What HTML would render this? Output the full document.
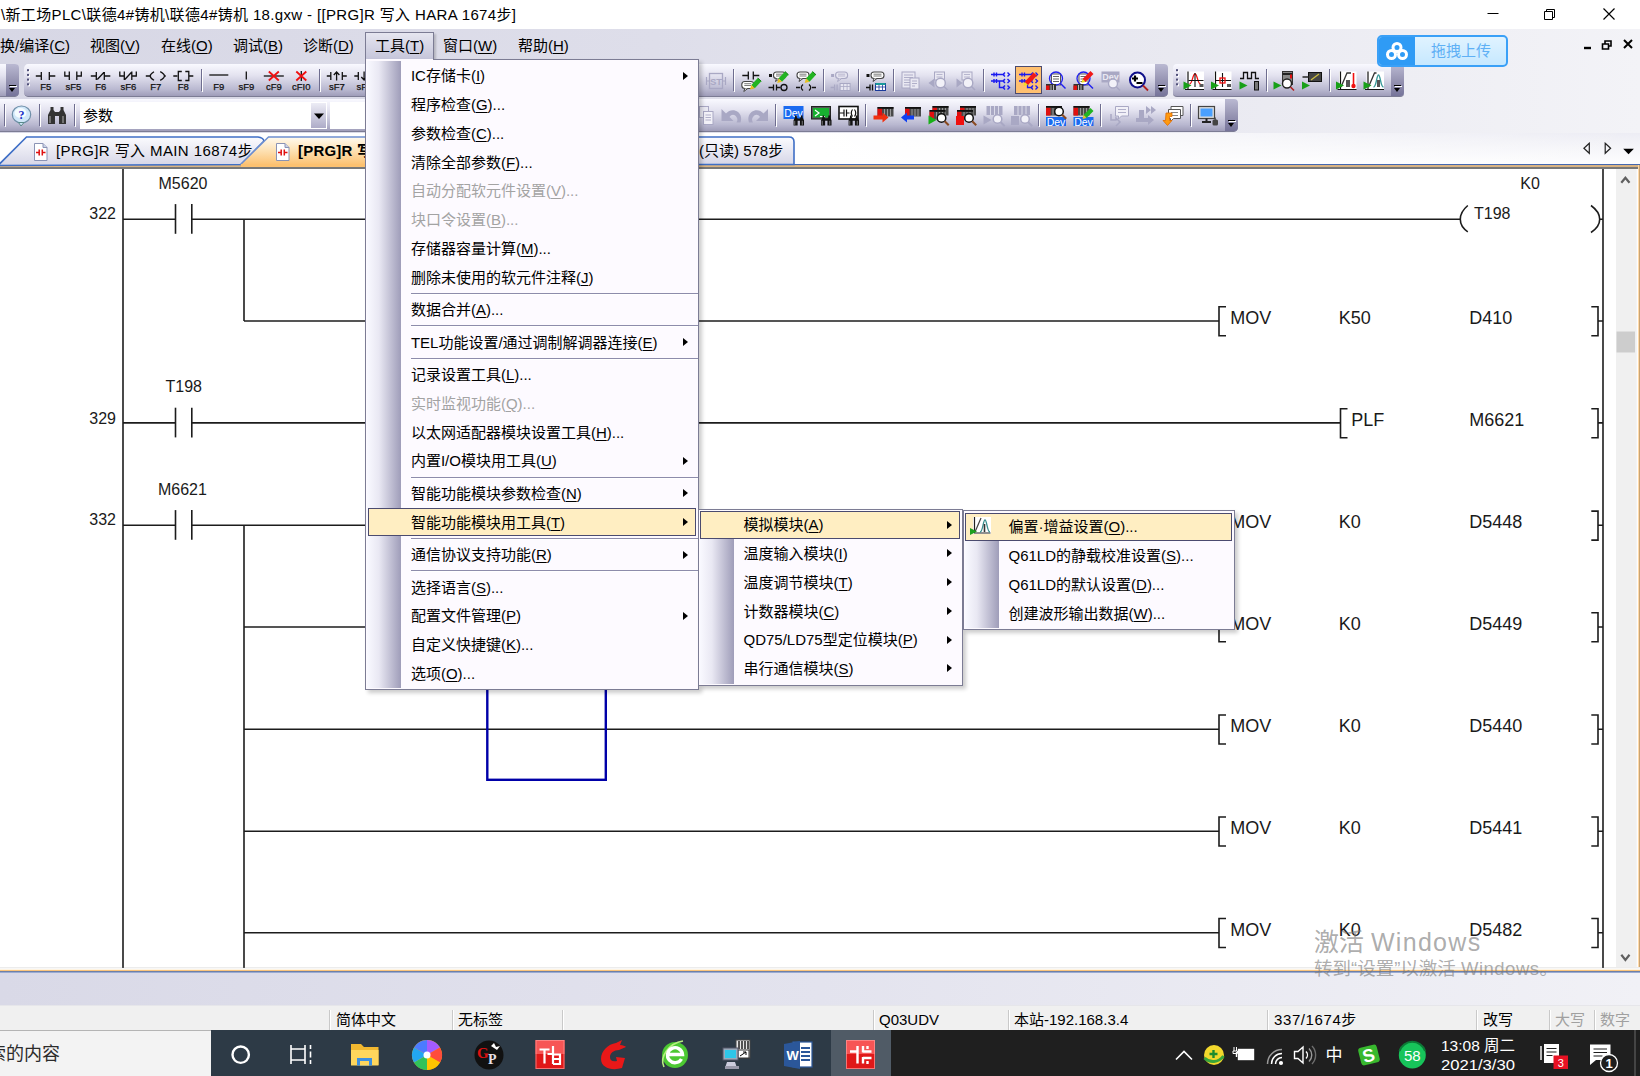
<!DOCTYPE html>
<html lang="zh-CN">
<head>
<meta charset="utf-8">
<title>GX Works2</title>
<style>
html,body{margin:0;padding:0;}
body{width:1640px;height:1076px;position:relative;overflow:hidden;background:#fff;
 font-family:"Liberation Sans","Noto Sans CJK SC",sans-serif;font-size:15px;color:#000;}
.abs{position:absolute;}
.t{position:absolute;white-space:nowrap;line-height:20px;height:20px;}
u{text-decoration:underline;text-underline-offset:2px;}
/* title */
#title{left:0;top:0;width:1640px;height:29px;background:#fff;}
/* dock area */
#dock{left:0;top:29px;width:1640px;height:104px;background:linear-gradient(90deg,#d7d7e5 0,#dedeea 40%,#f3f3f7 100%);}
.mb{position:absolute;top:7px;height:20px;line-height:20px;white-space:nowrap;}
/* toolbars */
.tb{position:absolute;height:32px;background:linear-gradient(180deg,#f9f9ff 0,#e4e3f0 35%,#b9b8d0 80%,#9f9db9 100%);border-bottom:1px solid #7c7c94;border-radius:0 4px 4px 0/0 5px 5px 0;}
.tbopt{position:absolute;top:0;width:13px;height:32px;background:linear-gradient(180deg,#bab9d2 0,#9795b3 50%,#76749a 100%);border-radius:0 4px 4px 0;}
.tbopt:before{content:"";position:absolute;left:3px;top:21px;width:7px;height:1px;background:#000;box-shadow:1px 1px 0 #fff;}
.tbopt:after{content:"";position:absolute;left:3px;top:24px;border:3.5px solid transparent;border-top:4px solid #000;border-bottom:0;}
.grip{position:absolute;top:5px;width:2px;height:20px;background:repeating-linear-gradient(180deg,#54547a 0,#54547a 2px,transparent 2px,transparent 4.4px);}
.grip:after{content:"";position:absolute;left:1px;top:1px;width:2px;height:20px;background:repeating-linear-gradient(180deg,#fff 0,#fff 2px,transparent 2px,transparent 4.4px);z-index:-1;}
.sep{position:absolute;top:5px;width:1px;height:24px;background:#6e6d8f;box-shadow:1px 1px 0 #fff;}
.ic{position:absolute;width:24px;height:24px;}
/* tabs */
#tabs{left:0;top:133px;width:1640px;height:35px;background:linear-gradient(90deg,#fff 0,#fff 50%,rgba(255,255,255,0) 100%),linear-gradient(180deg,#ededf4 0,#fdfdfe 85%);}
/* ladder */
#lad{left:0;top:169px;width:1640px;height:799px;background:#fff;}
.lt{font-family:"Liberation Sans",sans-serif;fill:#1a1a1a;}
/* bottom */
#strip{left:0;top:973px;width:1640px;height:32px;background:linear-gradient(90deg,#d9d9e7 0,#e3e3ee 50%,#f1f1f6 100%);}
#status{left:0;top:1005px;width:1640px;height:25px;background:#f0f0f0;border-top:1px solid #e6e6ea;box-sizing:border-box;}
.ss{position:absolute;top:4px;width:1px;height:21px;background:#c9c9c9;box-shadow:1px 0 0 #fff;}
.st{position:absolute;top:4px;line-height:20px;white-space:nowrap;}
#task{left:0;top:1030px;width:1640px;height:46px;background:#1f1f1f;}
/* menus */
.menu{position:absolute;background:#fdfaff;border:1px solid #7c7c94;box-sizing:border-box;box-shadow:3px 3px 4px rgba(0,0,0,.2);}
.strip{position:absolute;left:1px;top:1px;bottom:1px;background:linear-gradient(90deg,#f9f9ff 0,#e9e8f3 35%,#9f9db9 100%);}
.mi{position:absolute;white-space:nowrap;line-height:20px;height:20px;}
.dis{color:#a3a3a3;}
.msep{position:absolute;height:1px;background:#8d8cab;box-shadow:0 1px 0 #fff;}
.arr{position:absolute;width:0;height:0;border:4.5px solid transparent;border-left:5px solid #000;border-right:0;}
.hl{position:absolute;background:#ffeec2;border:1px solid #4b4b6f;box-sizing:border-box;}
</style>
</head>
<body>
<div id="title" class="abs">
<div class="t" style="left:1px;top:5px;letter-spacing:0.35px">\新工场PLC\联德4#铸机\联德4#铸机 18.gxw - [[PRG]R 写入 HARA 1674步]</div>
<svg class="abs" style="left:1480px;top:0" width="160" height="29" viewBox="0 0 160 29" fill="none" stroke="#000" stroke-width="1">
<path d="M7.5 13.5h11"/>
<path d="M64.5 11.5h8v8h-8z"/><path d="M66.5 11.5v-2h8v8h-2"/>
<path d="M123.5 8.5l11 11M134.5 8.5l-11 11" stroke-width="1.2"/>
</svg>
</div>
<div id="dock" class="abs">
<!-- menubar -->
<div class="mb" style="left:0px">换/编译(<u>C</u>)</div>
<div class="mb" style="left:90px">视图(<u>V</u>)</div>
<div class="mb" style="left:161px">在线(<u>O</u>)</div>
<div class="mb" style="left:233px">调试(<u>B</u>)</div>
<div class="mb" style="left:303px">诊断(<u>D</u>)</div>
<div class="abs" style="left:365px;top:3px;width:68.500px;height:28px;box-sizing:border-box;border:1px solid #7c7c94;border-bottom:0;background:linear-gradient(180deg,#e6e6f0 0,#c4c4d9 100%);box-shadow:2px 2px 2px rgba(0,0,0,.18)"></div>
<div class="mb" style="left:375px">工具(<u>T</u>)</div>
<div class="mb" style="left:443px">窗口(<u>W</u>)</div>
<div class="mb" style="left:518px">帮助(<u>H</u>)</div>
<!-- baidu upload widget -->
<div class="abs" style="left:1377px;top:6px;width:131px;height:32px;box-sizing:border-box;border:2px solid #3aa0f7;border-radius:5px;background:linear-gradient(180deg,#e0f3ff 0,#c6e8ff 100%);overflow:hidden;z-index:5">
<div class="abs" style="left:0;top:0;width:36px;height:28px;background:#2f9bf5"></div>
<svg class="abs" style="left:5px;top:3px" width="26" height="22" viewBox="0 0 26 22" fill="none" stroke="#fff" stroke-width="3"><circle cx="13" cy="7.5" r="4"/><circle cx="7.5" cy="14.5" r="4"/><circle cx="18.5" cy="14.5" r="4"/></svg>
<div class="t" style="left:52px;top:4px;color:#5fb0f5;font-size:15px">拖拽上传</div>
</div>
<!-- mdi child controls -->
<svg class="abs" style="left:1580px;top:8px" width="60" height="16" viewBox="0 0 60 16" fill="none" stroke="#000" stroke-width="2">
<path d="M4 11h7" stroke-width="2.4"/>
<path d="M22.5 7h6v5h-6z" stroke-width="1.6"/><path d="M25 7v-3h6v5h-2.5" stroke-width="1.6"/>
<path d="M44 3l8 8M52 3l-8 8"/>
</svg>
<!-- toolbar row 1 -->
<div class="tb" style="left:0;top:35px;width:19px"><div class="tbopt" style="left:6px"></div></div>
<div class="tb" id="tb1" style="left:24px;top:35px;width:1144px;border-radius:4px 4px 4px 4px/5px 5px 5px 5px"><div class="tbopt" style="left:1131px"></div><!--TB1--></div>
<div class="tb" id="tb2" style="left:1173px;top:35px;width:231px;border-radius:4px"><div class="tbopt" style="left:218px"></div><!--TB2--></div>
<!-- toolbar row 2 -->
<div class="tb" id="tb3" style="left:0;top:70px;width:1238px"><div class="tbopt" style="left:1225px"></div><!--TB3--></div>
<!--ICONS--><svg class="abs" style="left:0;top:0" width="1640" height="104" viewBox="0 29 1640 104"><rect x="28" y="70.2" width="2" height="2" fill="#fff"/><rect x="27" y="69.2" width="2" height="2" fill="#4f4f78"/>
<rect x="28" y="74.9" width="2" height="2" fill="#fff"/><rect x="27" y="73.9" width="2" height="2" fill="#4f4f78"/>
<rect x="28" y="79.6" width="2" height="2" fill="#fff"/><rect x="27" y="78.6" width="2" height="2" fill="#4f4f78"/>
<rect x="28" y="84.3" width="2" height="2" fill="#fff"/><rect x="27" y="83.3" width="2" height="2" fill="#4f4f78"/>
<rect x="1177" y="70.2" width="2" height="2" fill="#fff"/><rect x="1176" y="69.2" width="2" height="2" fill="#4f4f78"/>
<rect x="1177" y="74.9" width="2" height="2" fill="#fff"/><rect x="1176" y="73.9" width="2" height="2" fill="#4f4f78"/>
<rect x="1177" y="79.6" width="2" height="2" fill="#fff"/><rect x="1176" y="78.6" width="2" height="2" fill="#4f4f78"/>
<rect x="1177" y="84.3" width="2" height="2" fill="#fff"/><rect x="1176" y="83.3" width="2" height="2" fill="#4f4f78"/>
<g transform="translate(35.8 70.5)"><path d="M0 5.500H5.500M5.500 1.500V9.500M13.500 1.500V9.500M13.500 5.500H19.500" stroke="#111" stroke-width="1.3" fill="none"/><text x="10" y="19.2" font-size="9.5" text-anchor="middle" font-family="Liberation Sans, sans-serif" fill="#111" stroke="#111" stroke-width="0.25">F5</text></g>
<g transform="translate(63.3 70.5)"><path d="M1.500 1V5.500H6M6 1V9.500M13.500 1V9.500M13.500 5.500H18V1" stroke="#111" stroke-width="1.3" fill="none"/><text x="10" y="19.2" font-size="9.5" text-anchor="middle" font-family="Liberation Sans, sans-serif" fill="#111" stroke="#111" stroke-width="0.25">sF5</text></g>
<g transform="translate(90.8 70.5)"><path d="M0 5.500H5.500M5.500 1.500V9.500M13.500 1.500V9.500M13.500 5.500H19.500M6.500 9L13 2" stroke="#111" stroke-width="1.3" fill="none"/><text x="10" y="19.2" font-size="9.5" text-anchor="middle" font-family="Liberation Sans, sans-serif" fill="#111" stroke="#111" stroke-width="0.25">F6</text></g>
<g transform="translate(118.3 70.5)"><path d="M1.500 1V5.500H6M6 1V9.500M13.500 1V9.500M13.500 5.500H18V1M6.500 9L13 2" stroke="#111" stroke-width="1.3" fill="none"/><text x="10" y="19.2" font-size="9.5" text-anchor="middle" font-family="Liberation Sans, sans-serif" fill="#111" stroke="#111" stroke-width="0.25">sF6</text></g>
<g transform="translate(145.8 70.5)"><path d="M0 5.500H4.400M8.200 1.200Q0.600 5.500 8.200 9.800M14.400 1.200Q22.800 5.500 14.400 9.800M18.600 5.500H20" stroke="#111" stroke-width="1.3" fill="none"/><text x="10" y="19.2" font-size="9.5" text-anchor="middle" font-family="Liberation Sans, sans-serif" fill="#111" stroke="#111" stroke-width="0.25">F7</text></g>
<g transform="translate(173.3 70.5)"><path d="M0 5.500H4M8.500 1H5V10H8.500M12 1H15.500V10H12M15.500 5.500H20" stroke="#111" stroke-width="1.3" fill="none"/><text x="10" y="19.2" font-size="9.5" text-anchor="middle" font-family="Liberation Sans, sans-serif" fill="#111" stroke="#111" stroke-width="0.25">F8</text></g>
<g transform="translate(208.8 70.5)"><path d="M0.500 4.500H19.500" stroke="#111" stroke-width="1.3" fill="none"/><text x="10" y="19.2" font-size="9.5" text-anchor="middle" font-family="Liberation Sans, sans-serif" fill="#111" stroke="#111" stroke-width="0.25">F9</text></g>
<g transform="translate(236.3 70.5)"><path d="M10 1V9" stroke="#111" stroke-width="1.3" fill="none"/><text x="10" y="19.2" font-size="9.5" text-anchor="middle" font-family="Liberation Sans, sans-serif" fill="#111" stroke="#111" stroke-width="0.25">sF9</text></g>
<g transform="translate(263.8 70.5)"><path d="M0 5.500H20" stroke="#111" stroke-width="1.3" fill="none"/><path d="M5 1L15 10M15 1L5 10" stroke="#f01010" stroke-width="1.800" fill="none"/><text x="10" y="19.2" font-size="9.5" text-anchor="middle" font-family="Liberation Sans, sans-serif" fill="#111" stroke="#111" stroke-width="0.25">cF9</text></g>
<g transform="translate(291.3 70.5)"><path d="M10 0.500V10.500" stroke="#111" stroke-width="1.3" fill="none"/><path d="M5 1L15 10M15 1L5 10" stroke="#f01010" stroke-width="1.800" fill="none"/><text x="10" y="19.2" font-size="9.5" text-anchor="middle" font-family="Liberation Sans, sans-serif" fill="#111" stroke="#111" stroke-width="0.25">cFI0</text></g>
<g transform="translate(326.8 70.5)"><path d="M0 5.500H4M4 1.500V9.500M15.500 1.500V9.500M15.500 5.500H20M9.800 10V1.500M7 4.500L9.800 1.500L12.600 4.500" stroke="#111" stroke-width="1.3" fill="none"/><text x="10" y="19.2" font-size="9.5" text-anchor="middle" font-family="Liberation Sans, sans-serif" fill="#111" stroke="#111" stroke-width="0.25">sF7</text></g>
<g transform="translate(354.3 70.5)"><path d="M0 5.500H4M4 1.500V9.500M15.500 1.500V9.500M15.500 5.500H20M9.800 1V9.500M7 6.500L9.800 9.500L12.600 6.500" stroke="#111" stroke-width="1.3" fill="none"/><text x="10" y="19.2" font-size="9.5" text-anchor="middle" font-family="Liberation Sans, sans-serif" fill="#111" stroke="#111" stroke-width="0.25">sF8</text></g>
<rect x="201" y="69" width="1" height="22" fill="#6e6d8f"/><rect x="202" y="70" width="1" height="22" fill="#fff"/>
<rect x="319" y="69" width="1" height="22" fill="#6e6d8f"/><rect x="320" y="70" width="1" height="22" fill="#fff"/>
<g transform="translate(706 71)"><rect x="3.500" y="2.500" width="13" height="15" fill="none" stroke="#a9a8c4" stroke-width="1.300"/><path d="M0.500 6v8M19.500 6v8M0.500 10h3M16.500 10h3" stroke="#a9a8c4" stroke-width="1.200"/><text x="10" y="14" font-size="9.500" font-weight="bold" text-anchor="middle" font-family="Liberation Sans, sans-serif" fill="#a9a8c4">ST</text></g>
<rect x="733" y="69" width="1" height="22" fill="#6e6d8f"/><rect x="734" y="70" width="1" height="22" fill="#fff"/>
<g transform="translate(741.3 71)"><path d="M1 4.500H7M7 0.500V8.500M12 0.500V8.500M12 4.500H18" stroke="#111" stroke-width="1.3" fill="none"/><rect x="0.5" y="10.5" width="12" height="7" rx="3" fill="#fff" stroke="#444" stroke-width="1.100"/><path d="M3.5 17.5l-1 3l4-3" fill="#fff" stroke="#444" stroke-width="1"/><path d="M3.0 12.7h7M3.0 14.5h7" stroke="#444" stroke-width=".7"/><path d="M10 14l6.500-7 3.500 3.300-6.500 7z" fill="#22b422"/><path d="M10 14l3.500 3.300-4.800 1.300z" fill="#e8c020"/><path d="M16.5 7l3.500 3.300" stroke="#157a15" stroke-width="1"/></g>
<g transform="translate(768.5 71)"><rect x="0.500" y="3" width="3" height="3" fill="#111"/><rect x="5" y="1" width="12" height="6.5" rx="3" fill="#fff" stroke="#444" stroke-width="1.100"/><path d="M8 7.5l-1 3l4-3" fill="#fff" stroke="#444" stroke-width="1"/><path d="M7.5 3.2h7M7.5 5h7" stroke="#444" stroke-width=".7"/><path d="M10 7.5l6.500-7 3.500 3.300-6.500 7z" fill="#22b422"/><path d="M10 7.5l3.500 3.300-4.800 1.300z" fill="#e8c020"/><path d="M16.5 0.5l3.500 3.300" stroke="#157a15" stroke-width="1"/><path d="M0 16.500H5M5 13.500V19.500M8 13.500V19.500M8 16.500H12" stroke="#111" stroke-width="1.3" fill="none"/><circle cx="15.500" cy="16.500" r="3" stroke="#111" stroke-width="1.3" fill="none"/></g>
<g transform="translate(796 71)"><rect x="1" y="1" width="12" height="6.5" rx="3" fill="#fff" stroke="#444" stroke-width="1.100"/><path d="M4 7.5l-1 3l4-3" fill="#fff" stroke="#444" stroke-width="1"/><path d="M3.5 3.2h7M3.5 5h7" stroke="#444" stroke-width=".7"/><path d="M10 7.5l6.500-7 3.500 3.300-6.500 7z" fill="#22b422"/><path d="M10 7.5l3.500 3.300-4.800 1.300z" fill="#e8c020"/><path d="M16.5 0.5l3.500 3.300" stroke="#157a15" stroke-width="1"/><path d="M0 16.500H4M7 13.500Q3.500 16.500 7 19.500M13 13.500Q16.500 16.500 13 19.500M16 16.500H20" stroke="#111" stroke-width="1.3" fill="none"/></g>
<rect x="823" y="69" width="1" height="22" fill="#6e6d8f"/><rect x="824" y="70" width="1" height="22" fill="#fff"/>
<g transform="translate(830.6 71)"><rect x="0.500" y="3" width="3" height="3" fill="#a9a8c4"/><rect x="5" y="1" width="12" height="6.5" rx="3" fill="#e6e5f0" stroke="#a9a8c4" stroke-width="1.100"/><path d="M8 7.5l-1 3l4-3" fill="#e6e5f0" stroke="#a9a8c4" stroke-width="1"/><path d="M7.5 3.2h7M7.5 5h7" stroke="#a9a8c4" stroke-width=".7"/><path d="M0 16.500H4M4 13.500V19.500M6.500 13.500V19.500" stroke="#a9a8c4" stroke-width="1.300" fill="none"/><rect x="9.500" y="12.500" width="10" height="7" fill="#e6e5f0" stroke="#a9a8c4"/><path d="M9.500 15.500h10M13 12.500v7M16.500 12.500v7" stroke="#a9a8c4" stroke-width=".8"/></g>
<rect x="858" y="69" width="1" height="22" fill="#6e6d8f"/><rect x="859" y="70" width="1" height="22" fill="#fff"/>
<g transform="translate(866 71)"><rect x="0.500" y="3" width="3" height="3" fill="#111"/><rect x="5" y="1" width="13" height="6.5" rx="3" fill="#fff" stroke="#444" stroke-width="1.100"/><path d="M8 7.5l-1 3l4-3" fill="#fff" stroke="#444" stroke-width="1"/><path d="M7.5 3.2h8M7.5 5h8" stroke="#444" stroke-width=".7"/><path d="M0 16.500H4M4 13.500V19.500M6.500 13.500V19.500" stroke="#111" stroke-width="1.3" fill="none"/><rect x="9.500" y="12.500" width="10" height="7" fill="#fff" stroke="#1a3a9a"/><rect x="9.500" y="12" width="10" height="2" fill="#1a9a9a"/><path d="M9.500 16h10M13 14v5.500M16.500 14v5.500" stroke="#1a3a9a" stroke-width=".8"/></g>
<rect x="893" y="69" width="1" height="22" fill="#6e6d8f"/><rect x="894" y="70" width="1" height="22" fill="#fff"/>
<g transform="translate(901 71)"><rect x="1" y="1" width="13" height="16" fill="#e9e8f2" stroke="#a9a8c4"/><path d="M3 4h9M3 6.500h9M3 9h9M3 11.500h9M3 14h6" stroke="#a9a8c4" stroke-width=".9"/><rect x="9" y="7" width="9" height="11" fill="#e9e8f2" stroke="#a9a8c4"/><path d="M11 10h5M11 12.500h5M11 15h3" stroke="#a9a8c4" stroke-width=".9"/></g>
<g transform="translate(928.5 71)"><rect x="6" y="1" width="10" height="8" fill="#e9e8f2" stroke="#a9a8c4"/><path d="M8 3.500h6M8 6h6" stroke="#a9a8c4" stroke-width=".8"/><circle cx="12" cy="12" r="4.800" fill="#f2f1f8" stroke="#a9a8c4" stroke-width="1.400"/><path d="M15.500 15.500l3.500 3.500" stroke="#a9a8c4" stroke-width="1.600"/><path d="M0 12l6-4.500v9z" fill="#a9a8c4"/></g>
<g transform="translate(956 71)"><rect x="6" y="1" width="10" height="8" fill="#e9e8f2" stroke="#a9a8c4"/><path d="M8 3.500h6M8 6h6" stroke="#a9a8c4" stroke-width=".8"/><circle cx="12" cy="12" r="4.800" fill="#f2f1f8" stroke="#a9a8c4" stroke-width="1.400"/><path d="M15.500 15.500l3.500 3.500" stroke="#a9a8c4" stroke-width="1.600"/><path d="M6.500 12l-6-4.500v9z" fill="#a9a8c4"/></g>
<rect x="983" y="69" width="1" height="22" fill="#6e6d8f"/><rect x="984" y="70" width="1" height="22" fill="#fff"/>
<g transform="translate(990.5 71)"><path d="M0.500 3.500H14M3.500 1.500V5.500M6 1.500V5.500M14.500 1.500l-2 2 2 2M17 1.500l2 2-2 2M0.500 10H14M3.500 8V12M6 8V12M14.500 8l-2 2 2 2M17 8l2 2-2 2M9 10V16.500H14M14.500 14.500l-2 2 2 2M17 14.500l2 2-2 2" stroke="#1a1af0" stroke-width="1.400" fill="none"/></g>
<rect x="1015.500" y="66.500" width="26" height="27" fill="#ffc070" stroke="#4b4b6f" stroke-width="1"/>
<g transform="translate(1018.5 71)"><path d="M0.500 3.500H14M3.500 1.500V5.500M6 1.500V5.500M14.500 1.500l-2 2 2 2M17 1.500l2 2-2 2M0.500 10H14M3.500 8V12M6 8V12M14.500 8l-2 2 2 2M17 8l2 2-2 2M9 10V16.500H14M14.500 14.500l-2 2 2 2M17 14.500l2 2-2 2" stroke="#1a1af0" stroke-width="1.300" fill="none"/><path d="M6 11l9-9.500 3.500 3-9 9.500z" fill="#f01818"/><path d="M6 11l3.500 3-4.500 1z" fill="#f0e020"/></g>
<g transform="translate(1046 71)"><rect x="5.500" y="3" width="9" height="11" fill="#fff" stroke="#555"/><path d="M7 5.500h6M7 8h6M7 10.500h6" stroke="#555" stroke-width=".9"/><circle cx="10" cy="7.500" r="6.500" stroke="#2020f0" stroke-width="1.300" fill="none"/><path d="M14.500 12.500l5 5" stroke="#2020f0" stroke-width="1.400"/><rect x="0" y="13" width="10" height="6" fill="#333"/><rect x="0" y="14.5" width="3.500" height="4.500" fill="#e01010"/><path d="M5 14v5M7.5 14v5" stroke="#bbb" stroke-width="1"/></g>
<g transform="translate(1073.5 71)"><rect x="5.500" y="3" width="9" height="11" fill="#fff" stroke="#555"/><path d="M7 5.500h6M7 8h6M7 10.500h6" stroke="#555" stroke-width=".9"/><circle cx="10" cy="7.500" r="6.500" stroke="#2020f0" stroke-width="1.300" fill="none"/><path d="M14.500 12.500l5 5" stroke="#2020f0" stroke-width="1.400"/><path d="M9 8l8-8 3 3-8 8z" fill="#f01818"/><path d="M9 8l3 3-4 .8z" fill="#f0e020"/><rect x="0" y="13" width="10" height="6" fill="#333"/><rect x="0" y="14.5" width="3.500" height="4.500" fill="#e01010"/><path d="M5 14v5M7.5 14v5" stroke="#bbb" stroke-width="1"/></g>
<g transform="translate(1101 71)"><rect x="0.500" y="0.500" width="18" height="11" fill="#a9a8c4"/><text x="9.500" y="9" font-size="9" font-weight="bold" text-anchor="middle" font-family="Liberation Sans, sans-serif" fill="#e9e8f2">Dev</text><circle cx="12" cy="12.500" r="4.500" fill="#f2f1f8" stroke="#a9a8c4" stroke-width="1.400"/><path d="M15.500 16l3.500 3.500" stroke="#a9a8c4" stroke-width="1.600"/></g>
<g transform="translate(1128.5 71)"><circle cx="9" cy="9" r="7.500" fill="#fff" stroke="#10108a" stroke-width="2"/><path d="M3.500 7.500h6M6.500 4.500v6M8 12h6" stroke="#000" stroke-width="2.200"/><path d="M14.500 14.500l5 5" stroke="#b02020" stroke-width="1.800"/></g>
<g transform="translate(1184.5 71)"><rect x="2" y="0.500" width="17.500" height="17.500" fill="#fff"/><path d="M3.500 0.500V18M0.500 18.500H19.500" stroke="#111" stroke-width="1.200" fill="none"/><path d="M5 13c3 0 3-10 5.500-10s2.500 10 5.500 10" stroke="#f01010" stroke-width="1.300" fill="none"/><path d="M10.500 2v14M4 9.500h15" stroke="#111" stroke-width="1.100"/><rect x="15" y="13" width="4" height="3" fill="#555"/><path d="M-1 10.5l8 4-8 4z" fill="#18a018"/></g>
<g transform="translate(1212 71)"><rect x="2" y="0.500" width="17.500" height="17.500" fill="#fff"/><path d="M3.500 0.500V18M0.500 18.500H19.500" stroke="#111" stroke-width="1.200" fill="none"/><path d="M10.500 2v14M4 9.500h15" stroke="#111" stroke-width="1.100"/><rect x="8" y="7" width="5" height="5" fill="none" stroke="#f01010" stroke-width="1.300"/><rect x="15" y="13" width="4" height="3" fill="#555"/><path d="M-1 10.5l8 4-8 4z" fill="#18a018"/></g>
<g transform="translate(1239.5 71)"><path d="M0.500 7.500H4V1.500H8V7.500H12V1.500H16V7.500H19.500" stroke="#111" stroke-width="1.300" fill="none"/><rect x="15" y="10.500" width="4" height="8.500" fill="#777" stroke="#111"/><path d="M0 10.5l8 4-8 4z" fill="#18a018"/></g>
<rect x="1266" y="69" width="1" height="22" fill="#6e6d8f"/><rect x="1267" y="70" width="1" height="22" fill="#fff"/>
<g transform="translate(1274.5 71)"><rect x="8" y="0.500" width="10" height="13" fill="#888" stroke="#333"/><path d="M8 3h10" stroke="#222" stroke-width="2"/><rect x="15.500" y="3.500" width="2" height="4" fill="#e01010"/><circle cx="12.500" cy="12.500" r="4.500" fill="#fff" stroke="#222" stroke-width="1.400"/><path d="M16 16l3.500 3.500" stroke="#b02020" stroke-width="1.600"/><path d="M-1 10.5l8 4-8 4z" fill="#18a018"/></g>
<g transform="translate(1302 71)"><rect x="6.500" y="1.500" width="13" height="9" fill="#444" stroke="#111"/><path d="M9 9l8-6" stroke="#d0c040" stroke-width="1.200"/><path d="M0.500 6h6" stroke="#333" stroke-width="1.600"/><path d="M0 10.5l8 4-8 4z" fill="#18a018"/></g>
<rect x="1329" y="69" width="1" height="22" fill="#6e6d8f"/><rect x="1330" y="70" width="1" height="22" fill="#fff"/>
<g transform="translate(1337 71)"><rect x="2" y="0.500" width="17.500" height="17.500" fill="#fff"/><path d="M3.500 0.500V18M0.500 18.500H19.500" stroke="#111" stroke-width="1.200" fill="none"/><path d="M4 16l6-14h4" stroke="#333" stroke-width="1.300" fill="none"/><rect x="9" y="9" width="4" height="7" fill="#555"/><path d="M16.500 2v11" stroke="#f01010" stroke-width="1.600"/><circle cx="16.500" cy="15" r="2.200" fill="#f01010"/><path d="M-1 10.5l8 4-8 4z" fill="#18a018"/></g>
<g transform="translate(1364.5 71)"><rect x="2" y="0.500" width="17.500" height="17.500" fill="#fff"/><path d="M3.500 0.500V18M0.500 18.500H19.500" stroke="#111" stroke-width="1.200" fill="none"/><path d="M4 16l6-14h2" stroke="#333" stroke-width="1.300" fill="none"/><path d="M9 16c3 0 3-12 5-12s2 12 5 12" stroke="#3a9a9a" stroke-width="1.400" fill="none"/><rect x="12.500" y="9" width="3" height="7" fill="#555"/><path d="M-1 10.5l8 4-8 4z" fill="#18a018"/></g>
<rect x="4" y="104" width="1" height="22" fill="#6e6d8f"/><rect x="5" y="105" width="1" height="22" fill="#fff"/>
<g transform="translate(11.5 105.5)"><ellipse cx="10" cy="9" rx="9.200" ry="8.500" fill="#cfe6f8" stroke="#6f8fa8" stroke-width="1.200"/><ellipse cx="9" cy="7.500" rx="6" ry="5" fill="#f4fbff"/><path d="M7 17l2.500 3.500 3-3.500z" fill="#cfe6f8" stroke="#5a8a8a" stroke-width="1"/><text x="10" y="13.500" font-size="12" font-weight="bold" text-anchor="middle" font-family="Liberation Serif, serif" fill="#2030c8">?</text></g>
<rect x="39" y="104" width="1" height="22" fill="#6e6d8f"/><rect x="40" y="105" width="1" height="22" fill="#fff"/>
<g transform="translate(47 106)"><g transform="translate(0 0) scale(1)"><path d="M1 18V9l2.500-5V1h3v3l1.500 2h4l1.500-2V1h3v3l2.500 5v9h-7v-8h-4v8z" fill="#333"/><path d="M3 10v7M16 10v7" stroke="#888" stroke-width="1.500"/></g></g>
<rect x="74" y="104" width="1" height="22" fill="#6e6d8f"/><rect x="75" y="105" width="1" height="22" fill="#fff"/>
<rect x="80" y="102" width="247" height="27" fill="#fff"/><defs><linearGradient id="gDD" x1="0" y1="0" x2="0" y2="1"><stop offset="0" stop-color="#ececf5"/><stop offset="1" stop-color="#aeacc8"/></linearGradient></defs><rect x="311" y="103" width="15" height="25" fill="url(#gDD)"/><path d="M314 113.500h10l-5 5.500z" fill="#000"/><rect x="330" y="102" width="360" height="27" fill="#fff"/>
<text x="83" y="120.500" font-size="15" font-family="Liberation Sans, Noto Sans CJK SC, sans-serif" fill="#000">参数</text>
<g transform="translate(696 106)"><rect x="3.500" y="0.500" width="9" height="11" fill="#e9e8f2" stroke="#a9a8c4"/><rect x="7.500" y="5.500" width="9.500" height="13" fill="#f2f1f8" stroke="#a9a8c4"/><path d="M9.500 9h5.500M9.500 11.500h5.500M9.500 14h5.500" stroke="#a9a8c4" stroke-width=".9"/></g>
<g transform="translate(721 106)"><path d="M0.500 3v12h12l-4-4c2-3 5-3 7 0 1.500 2 1 4 0 5.500h4c1.500-4 .5-8-2.500-10.500-4-3-9-2-12 1.500z" fill="#a9a8c4"/></g>
<g transform="translate(748.5 106)"><path d="M19.500 3v12h-12l4-4c-2-3-5-3-7 0-1.500 2-1 4 0 5.500h-4c-1.500-4-.5-8 2.500-10.500 4-3 9-2 12 1.500z" fill="#a9a8c4"/></g>
<rect x="775" y="104" width="1" height="22" fill="#6e6d8f"/><rect x="776" y="105" width="1" height="22" fill="#fff"/>
<g transform="translate(783.5 106)"><rect x="0" y="0" width="20" height="13" fill="#1a6af0"/><text x="10" y="10.500" font-size="10.500" text-anchor="middle" font-family="Liberation Sans, sans-serif" fill="#fff">Dev</text><g transform="translate(9.5 9) scale(0.58)"><path d="M1 18V9l2.500-5V1h3v3l1.500 2h4l1.500-2V1h3v3l2.500 5v9h-7v-8h-4v8z" fill="#111"/><path d="M3 10v7M16 10v7" stroke="#888" stroke-width="1.500"/></g></g>
<g transform="translate(811 106)"><rect x="0.500" y="0.500" width="19" height="12.500" fill="#555" stroke="#222"/><rect x="2" y="2" width="16" height="9.500" fill="#18b030"/><path d="M4 4l4 3-4 3M9 10.500h5" stroke="#fff" stroke-width="1.200" fill="none"/><g transform="translate(9.5 9) scale(0.58)"><path d="M1 18V9l2.500-5V1h3v3l1.500 2h4l1.500-2V1h3v3l2.500 5v9h-7v-8h-4v8z" fill="#111"/><path d="M3 10v7M16 10v7" stroke="#888" stroke-width="1.500"/></g></g>
<g transform="translate(838.5 106)"><rect x="0.500" y="0.500" width="19" height="12.500" fill="#fff" stroke="#111" stroke-width="1.600"/><path d="M1 7h4.500M5.500 3.500v7M8 3.500v7M8 7h3M14 3.500Q11.500 7 14 10.500M16 3.500Q18.500 7 16 10.500" stroke="#111" stroke-width="1.200" fill="none"/><g transform="translate(9.5 9) scale(0.58)"><path d="M1 18V9l2.500-5V1h3v3l1.500 2h4l1.500-2V1h3v3l2.500 5v9h-7v-8h-4v8z" fill="#111"/><path d="M3 10v7M16 10v7" stroke="#888" stroke-width="1.500"/></g></g>
<rect x="865" y="104" width="1" height="22" fill="#6e6d8f"/><rect x="866" y="105" width="1" height="22" fill="#fff"/>
<g transform="translate(873.5 106)"><rect x="4" y="1" width="16" height="9.500" fill="#4a4a4a"/><rect x="4" y="1" width="16" height="1.800" fill="#111"/><rect x="4" y="2.8" width="4.500" height="7.700" fill="#e01010"/><path d="M11 3v7.500M14 3v7.500M17 3v7.500" stroke="#999" stroke-width="1"/><path d="M0 9.500h9v-3l6 5-6 5v-3h-9z" fill="#f03010"/></g>
<g transform="translate(901 106)"><rect x="4" y="1" width="16" height="9.500" fill="#4a4a4a"/><rect x="4" y="1" width="16" height="1.800" fill="#111"/><rect x="4" y="2.8" width="4.500" height="7.700" fill="#e01010"/><path d="M11 3v7.500M14 3v7.500M17 3v7.500" stroke="#999" stroke-width="1"/><path d="M13 9.500h-7v-3l-6 5 6 5v-3h7z" fill="#1040f0"/></g>
<g transform="translate(928.5 106)"><rect x="4" y="0" width="16" height="9.500" fill="#4a4a4a"/><rect x="4" y="0" width="16" height="1.800" fill="#111"/><rect x="4" y="1.8" width="4.500" height="7.700" fill="#e01010"/><path d="M11 2v7.500M14 2v7.500M17 2v7.500" stroke="#999" stroke-width="1"/><rect x="1" y="4" width="16" height="9.500" fill="#4a4a4a"/><rect x="1" y="4" width="16" height="1.800" fill="#111"/><rect x="1" y="5.8" width="4.500" height="7.700" fill="#e01010"/><path d="M8 6v7.500M11 6v7.500M14 6v7.500" stroke="#999" stroke-width="1"/><path d="M0 9.500l8 4.500-8 4.500z" fill="#18b018"/><circle cx="13" cy="12" r="4.300" fill="#fff" stroke="#111" stroke-width="1.500"/><path d="M16.2 15.2l4 4" stroke="#8a4a20" stroke-width="2"/></g>
<g transform="translate(956 106)"><rect x="4" y="0" width="16" height="9.500" fill="#4a4a4a"/><rect x="4" y="0" width="16" height="1.800" fill="#111"/><rect x="4" y="1.8" width="4.500" height="7.700" fill="#e01010"/><path d="M11 2v7.500M14 2v7.500M17 2v7.500" stroke="#999" stroke-width="1"/><rect x="1" y="4" width="16" height="9.500" fill="#4a4a4a"/><rect x="1" y="4" width="16" height="1.800" fill="#111"/><rect x="1" y="5.8" width="4.500" height="7.700" fill="#e01010"/><path d="M8 6v7.500M11 6v7.500M14 6v7.500" stroke="#999" stroke-width="1"/><rect x="0" y="10" width="8" height="9" fill="#f01010"/><circle cx="13" cy="12" r="4.300" fill="#fff" stroke="#111" stroke-width="1.500"/><path d="M16.2 15.2l4 4" stroke="#8a4a20" stroke-width="2"/></g>
<g transform="translate(983.5 106)"><rect x="3" y="0" width="16" height="9" fill="#a9a8c4"/><path d="M7 0v9M11 0v9M15 0v9" stroke="#e9e8f2" stroke-width=".8"/><path d="M0 9.500l8 4.500-8 4.500z" fill="#a9a8c4"/><circle cx="14" cy="13" r="4.300" fill="#f2f1f8" stroke="#a9a8c4" stroke-width="1.500"/><path d="M17.2 16.2l4 4" stroke="#a9a8c4" stroke-width="2"/></g>
<g transform="translate(1011 106)"><rect x="3" y="0" width="16" height="9" fill="#a9a8c4"/><path d="M7 0v9M11 0v9M15 0v9" stroke="#e9e8f2" stroke-width=".8"/><rect x="0" y="10" width="8" height="9" fill="#a9a8c4"/><circle cx="14" cy="13" r="4.300" fill="#f2f1f8" stroke="#a9a8c4" stroke-width="1.500"/><path d="M17.2 16.2l4 4" stroke="#a9a8c4" stroke-width="2"/></g>
<rect x="1038" y="104" width="1" height="22" fill="#6e6d8f"/><rect x="1039" y="105" width="1" height="22" fill="#fff"/>
<g transform="translate(1046 106)"><rect x="0" y="11" width="20" height="9" fill="#1a6af0"/><text x="10" y="19.500" font-size="10.500" text-anchor="middle" font-family="Liberation Sans, sans-serif" fill="#fff">Dev</text><rect x="0" y="0" width="16" height="9.500" fill="#4a4a4a"/><rect x="0" y="0" width="16" height="1.800" fill="#111"/><rect x="0" y="1.8" width="4.500" height="7.700" fill="#e01010"/><path d="M7 2v7.500M10 2v7.500M13 2v7.500" stroke="#999" stroke-width="1"/><circle cx="13" cy="5.5" r="4.300" fill="#fff" stroke="#111" stroke-width="1.500"/><path d="M16.2 8.7l4 4" stroke="#8a4a20" stroke-width="2"/></g>
<g transform="translate(1073.5 106)"><rect x="0" y="11" width="20" height="9" fill="#1a6af0"/><text x="10" y="19.500" font-size="10.500" text-anchor="middle" font-family="Liberation Sans, sans-serif" fill="#fff">Dev</text><rect x="0" y="0" width="16" height="9.500" fill="#4a4a4a"/><rect x="0" y="0" width="16" height="1.800" fill="#111"/><rect x="0" y="1.8" width="4.500" height="7.700" fill="#e01010"/><path d="M7 2v7.500M10 2v7.500M13 2v7.500" stroke="#999" stroke-width="1"/><path d="M10 9l7-7 3 3-7 7z" fill="#22b422"/><path d="M10 9l3 3-4 1z" fill="#e8c020"/></g>
<rect x="1100" y="104" width="1" height="22" fill="#6e6d8f"/><rect x="1101" y="105" width="1" height="22" fill="#fff"/>
<g transform="translate(1110 106)"><path d="M5.500 0.500h13v9.500h-7l-3 3v-3h-3z" fill="#f2f1f8" stroke="#a9a8c4"/><path d="M8 3.500h8M8 6.500h8" stroke="#a9a8c4" stroke-width=".9"/><path d="M1 8v6h5v-2l4 4-4 4" fill="none" stroke="#a9a8c4" stroke-width="1.500"/></g>
<g transform="translate(1136 106)"><rect x="3" y="4" width="5" height="8" fill="#a9a8c4"/><path d="M0 14h12v-3l6 5-6 5v-3h-12z" fill="#a9a8c4" transform="translate(0 -2)"/><path d="M10 0l5 4-5 4zM15 0l5 4-5 4z" fill="#a9a8c4"/></g>
<g transform="translate(1163.5 106)"><path d="M7.500 0.500h12v9h-12z" fill="#fff" stroke="#555"/><path d="M5 3.500h12v9h-7l-3 3v-3h-2z" fill="#fff" stroke="#555"/><path d="M7.500 6.500h7M7.500 9.500h7" stroke="#777" stroke-width=".9"/><path d="M2.500 7h6v3.500h-2.500v4h2.500l-4.500 5-4.500-5h2.500z" fill="#ff9a10" stroke="#e06a00" stroke-width=".8"/></g>
<rect x="1190" y="104" width="1" height="22" fill="#6e6d8f"/><rect x="1191" y="105" width="1" height="22" fill="#fff"/>
<g transform="translate(1198 106)"><rect x="0.500" y="0.500" width="16" height="12" fill="#ddd" stroke="#444" stroke-width="1.200"/><rect x="2.500" y="2.500" width="12" height="8" fill="#4aa0ff"/><path d="M8.500 12.500v3M4 16h9" stroke="#222" stroke-width="2"/><rect x="14.500" y="13.500" width="5.500" height="6" rx="1.500" fill="#444"/><path d="M17.200 11.500v2.500" stroke="#444" stroke-width="1.200"/></g></svg><!--/ICONS-->
</div>
<div id="tabs" class="abs">
<svg class="abs" style="left:0;top:0" width="1640" height="36" viewBox="0 133 1640 36">
<defs>
<linearGradient id="gT1" x1="0" y1="0" x2="0" y2="1"><stop offset="0" stop-color="#fbfbfe"/><stop offset="1" stop-color="#d6d6e7"/></linearGradient>
<linearGradient id="gT2" x1="0" y1="0" x2="0" y2="1"><stop offset="0" stop-color="#fffaf0"/><stop offset="0.45" stop-color="#fde3b8"/><stop offset="1" stop-color="#fcc170"/></linearGradient>
</defs>
<!-- bottom lines -->
<rect x="0" y="164" width="1640" height="1" fill="#4468b0"/>
<rect x="0" y="165" width="1640" height="2" fill="#d9b382"/>
<rect x="0" y="167" width="1638" height="2" fill="#787878"/><rect x="1638" y="165" width="1" height="4" fill="#ffd9a8"/><rect x="1639" y="165" width="1" height="4" fill="#c9a474"/>
<!-- tab 3 (inactive, right) -->
<path d="M600 164.5 L627 137 H789 Q794 137 794 142 V164.5 Z" fill="url(#gT1)" stroke="#3f6fc6" stroke-width="1.6"/>
<!-- tab 1 (inactive) -->
<path d="M-2 165.5 L26.5 137 H258 Q263 137.5 264 141 L241 164.5 Z" fill="url(#gT1)" stroke="#3f6fc6" stroke-width="1.6"/>
<!-- tab 2 (active) -->
<path d="M240.5 165 L268.5 137 H640 Q646 137 646 143 V165 Z" fill="url(#gT2)"/>
<path d="M240.5 164.5 L268.5 137 H640 Q646 137 646 143 V164" fill="none" stroke="#6d8fd0" stroke-width="1.4"/>
<rect x="241" y="164" width="405" height="3" fill="#fcc170"/>
<!-- nav arrows -->
<path d="M1589.300 143.300 L1583.900 148.300 L1589.300 153.300 Z" fill="none" stroke="#222" stroke-width="1.200"/>
<path d="M1605.200 143.300 L1610.600 148.300 L1605.200 153.300 Z" fill="none" stroke="#222" stroke-width="1.200"/>
<path d="M1623.200 148.800 H1633.900 L1628.500 154.200 Z" fill="#000"/>
<!-- file icons -->
<g><path d="M34.500 143.500 h8.500 l4 4 v13 h-12.500 z" fill="#fff" stroke="#8a93b5" stroke-width="1"/><path d="M43 143.500 v4 h4" fill="#c9d0e6" stroke="#8a93b5" stroke-width="1"/><path d="M36 152.500 h3 M42.500 152.500 h3 M39.200 149.500 v6 M42.300 149.500 v6" stroke="#e01010" stroke-width="1.500"/></g>
<g transform="translate(242 0)"><path d="M34.500 143.500 h8.500 l4 4 v13 h-12.500 z" fill="#fff" stroke="#8a93b5" stroke-width="1"/><path d="M43 143.500 v4 h4" fill="#c9d0e6" stroke="#8a93b5" stroke-width="1"/><path d="M36 152.500 h3 M42.500 152.500 h3 M39.200 149.500 v6 M42.300 149.500 v6" stroke="#e01010" stroke-width="1.500"/></g>
</svg>
<div class="t" style="left:56px;top:8px;letter-spacing:0.4px">[PRG]R 写入 MAIN 16874步</div>
<div class="t" style="left:298px;top:8px;font-weight:bold;letter-spacing:0.2px">[PRG]R 写入 HARA 1674步</div>
<div class="t" style="left:699px;top:8px">(只读) 578步</div>
</div>
<!--LADDER--><div id="lad" class="abs">
<svg class="abs" style="left:0;top:0" width="1640" height="799" viewBox="0 169 1640 799">
<g fill="none" stroke="#1c1c1c" stroke-width="1.6">
<path d="M123 169 L123 968"/>
<path d="M1603 169 L1603 968"/>
<path d="M244 219.3 L244 321.0"/>
<path d="M244 525.3 L244 968"/>
<path d="M123 219.3 L175.5 219.3"/>
<path d="M175.5 204.10000000000002 L175.5 233.8"/>
<path d="M191.8 204.10000000000002 L191.8 233.8"/>
<path d="M191.8 219.3 L1460 219.3"/>
<path d="M244 321.0 L1219 321.0"/>
<path d="M123 422.9 L175.5 422.9"/>
<path d="M175.5 407.7 L175.5 437.4"/>
<path d="M191.8 407.7 L191.8 437.4"/>
<path d="M191.8 422.9 L1340.5 422.9"/>
<path d="M123 525.3 L175.5 525.3"/>
<path d="M175.5 510.09999999999997 L175.5 539.8"/>
<path d="M191.8 510.09999999999997 L191.8 539.8"/>
<path d="M191.8 525.3 L1219 525.3"/>
<path d="M244 627.0 L1219 627.0"/>
<path d="M244 729.2 L1219 729.2"/>
<path d="M244 831.2 L1219 831.2"/>
<path d="M244 932.7 L1219 932.7"/>
<path d="M1226 306.8 H1219 V335.8 H1226"/>
<path d="M1591.3 306.8 H1598 V335.8 H1591.3 M1598 321.0 H1603"/>
<path d="M1226 511.1 H1219 V540.1 H1226"/>
<path d="M1591.3 511.1 H1598 V540.1 H1591.3 M1598 525.3 H1603"/>
<path d="M1226 612.8 H1219 V641.8 H1226"/>
<path d="M1591.3 612.8 H1598 V641.8 H1591.3 M1598 627.0 H1603"/>
<path d="M1226 715.0 H1219 V744.0 H1226"/>
<path d="M1591.3 715.0 H1598 V744.0 H1591.3 M1598 729.2 H1603"/>
<path d="M1226 817.0 H1219 V846.0 H1226"/>
<path d="M1591.3 817.0 H1598 V846.0 H1591.3 M1598 831.2 H1603"/>
<path d="M1226 918.5 H1219 V947.5 H1226"/>
<path d="M1591.3 918.5 H1598 V947.5 H1591.3 M1598 932.7 H1603"/>
<path d="M1347.5 408.7 H1340.5 V437.7 H1347.5"/>
<path d="M1591.3 408.7 H1598 V437.7 H1591.3 M1598 422.9 H1603"/>
<path d="M1467.8 205.5 Q1460.3 211.8 1460.3 219.3 Q1460.3 226.8 1467.8 231.8"/>
<path d="M1591 205.5 Q1599.7 211.8 1599.7 219.3 Q1599.7 226.8 1591 232.5 M1599.7 219.3 H1603"/>
</g>
<rect x="487.3" y="680" width="118.500" height="99.800" fill="none" stroke="#0000a8" stroke-width="2.400"/>
<g class="lt" font-family="Liberation Sans, sans-serif" fill="#1a1a1a">
<text x="183" y="188.6" font-size="16" text-anchor="middle">M5620</text>
<text x="183.7" y="392.2" font-size="16" text-anchor="middle">T198</text>
<text x="182.4" y="494.6" font-size="16" text-anchor="middle">M6621</text>
<text x="116" y="218.7" font-size="16" text-anchor="end">322</text>
<text x="116" y="423.5" font-size="16" text-anchor="end">329</text>
<text x="116" y="524.7" font-size="16" text-anchor="end">332</text>
<text x="1520.3" y="188.7" font-size="16" text-anchor="start">K0</text>
<text x="1474" y="218.8" font-size="16" text-anchor="start">T198</text>
<text x="1230.3" y="324.0" font-size="18" text-anchor="start">MOV</text>
<text x="1338.8" y="324.0" font-size="18" text-anchor="start">K50</text>
<text x="1469.2" y="324.0" font-size="18" text-anchor="start">D410</text>
<text x="1351.3" y="425.9" font-size="18" text-anchor="start">PLF</text>
<text x="1469.2" y="425.9" font-size="18" text-anchor="start">M6621</text>
<text x="1230.3" y="528.3" font-size="18" text-anchor="start">MOV</text>
<text x="1338.8" y="528.3" font-size="18" text-anchor="start">K0</text>
<text x="1469.2" y="528.3" font-size="18" text-anchor="start">D5448</text>
<text x="1230.3" y="630.0" font-size="18" text-anchor="start">MOV</text>
<text x="1338.8" y="630.0" font-size="18" text-anchor="start">K0</text>
<text x="1469.2" y="630.0" font-size="18" text-anchor="start">D5449</text>
<text x="1230.3" y="732.2" font-size="18" text-anchor="start">MOV</text>
<text x="1338.8" y="732.2" font-size="18" text-anchor="start">K0</text>
<text x="1469.2" y="732.2" font-size="18" text-anchor="start">D5440</text>
<text x="1230.3" y="834.2" font-size="18" text-anchor="start">MOV</text>
<text x="1338.8" y="834.2" font-size="18" text-anchor="start">K0</text>
<text x="1469.2" y="834.2" font-size="18" text-anchor="start">D5441</text>
<text x="1230.3" y="935.7" font-size="18" text-anchor="start">MOV</text>
<text x="1338.8" y="935.7" font-size="18" text-anchor="start">K0</text>
<text x="1469.2" y="935.7" font-size="18" text-anchor="start">D5482</text>
</g>
<rect x="1616" y="169" width="20" height="799" fill="#f0f0f0"/>
<rect x="1616.500" y="331.500" width="18.500" height="21" fill="#cdcdcd"/>
<path d="M1621.3 182.800 L1625.4 177.700 L1629.500 182.800" fill="none" stroke="#606060" stroke-width="2.200"/>
<path d="M1621.3 954.800 L1625.4 959.900 L1629.500 954.800" fill="none" stroke="#606060" stroke-width="2.200"/>
<rect x="1636" y="169" width="1" height="799" fill="#f4f4f4"/><rect x="1637" y="169" width="1" height="799" fill="#fdfdfd"/><rect x="1638" y="169" width="1" height="799" fill="#ffd9a8"/><rect x="1639" y="169" width="1" height="799" fill="#c9a474"/>
</svg>
</div><!--/LADDER-->
<div class="abs" style="left:0;top:967px;width:1640px;height:6px;background:linear-gradient(180deg,#ececec 0,#ececec 1px,#f7f7f7 1px,#f7f7f7 2px,#fff4e2 2px,#fff4e2 3px,#fbc57c 3px,#fbc57c 4px,#6f80a6 4px,#6f80a6 5px,#9aabd2 5px,#9aabd2 6px)"></div>
<div class="abs" style="left:123px;top:967px;width:1.600px;margin-left:-.8px;height:1px;background:#555"></div><div class="abs" style="left:244px;top:967px;width:1.600px;margin-left:-.8px;height:1px;background:#555"></div><div class="abs" style="left:1603px;top:967px;width:1.600px;margin-left:-.8px;height:1px;background:#555"></div>
<div id="strip" class="abs"></div>
<div id="status" class="abs">
<div class="ss" style="left:329px"></div><div class="st" style="left:336px">简体中文</div>
<div class="ss" style="left:452px"></div><div class="st" style="left:458px">无标签</div>
<div class="ss" style="left:562px"></div>
<div class="ss" style="left:873px"></div><div class="st" style="left:879px">Q03UDV</div>
<div class="ss" style="left:1008px"></div><div class="st" style="left:1014px">本站-192.168.3.4</div>
<div class="ss" style="left:1267px"></div><div class="st" style="left:1274px;letter-spacing:0.6px">337/1674步</div>
<div class="ss" style="left:1476px"></div><div class="st" style="left:1483px">改写</div>
<div class="ss" style="left:1549px"></div><div class="st" style="left:1555px;color:#a0a0a0">大写</div>
<div class="ss" style="left:1594px"></div><div class="st" style="left:1600px;color:#a0a0a0">数字</div>
</div>
<div id="task" class="abs">
<div class="abs" style="left:211px;top:0;width:680px;height:46px;background:#2d3a46"></div>
<div class="abs" style="left:831px;top:0;width:60px;height:46px;background:#505b66"></div>
<div class="abs" style="left:0;top:0;width:211px;height:46px;background:#f3f3f3;border-top:1px solid #b4b4b4;box-sizing:border-box"></div>
<div class="t" style="left:-12px;top:12px;font-size:18px;line-height:24px;height:24px;color:#2b2b2b">索的内容</div>
<svg class="abs" style="left:211px;top:0" width="1429" height="46" viewBox="211 1030 1429 46">
<!-- cortana -->
<circle cx="240.700" cy="1054.700" r="8.200" fill="none" stroke="#fff" stroke-width="2.400"/>
<!-- task view -->
<g fill="none" stroke="#fff" stroke-width="1.600"><path d="M291 1045v4M291 1060v4M291 1049h14v11h-14zM305 1045v4M305 1060v4"/><path d="M310.500 1045v4M310.500 1051.500v6M310.500 1060v4"/></g>
<!-- explorer folder -->
<path d="M351 1044h10l3 3h14.500v18h-27.500z" fill="#f2b830"/><path d="M351 1050h27.500v15.500h-27.500z" fill="#ffd65c"/><path d="M357 1058h15v7.500h-15z" fill="#3d8fe0"/><path d="M360 1061h9v4.500h-9z" fill="#ffd65c"/>
<!-- photos pinwheel -->
<g transform="translate(427 1055)"><circle r="15" fill="#ffb400"/><path d="M0 0L0 -15A15 15 0 0 1 13 -7.500Z" fill="#a45bff"/><path d="M0 0L13 -7.500A15 15 0 0 1 13 7.500Z" fill="#ff4c3b"/><path d="M0 0L13 7.500A15 15 0 0 1 0 15Z" fill="#ffc400"/><path d="M0 0L0 15A15 15 0 0 1 -13 7.500Z" fill="#30c25a"/><path d="M0 0L-13 7.500A15 15 0 0 1 -13 -7.500Z" fill="#22a6f2"/><path d="M0 0L-13 -7.500A15 15 0 0 1 0 -15Z" fill="#4b7bff"/><circle r="3.500" fill="#fff"/></g>
<!-- GP -->
<g transform="translate(489 1055)"><circle r="14.500" fill="#111"/><text x="-12" y="3" font-size="15" font-weight="bold" fill="#e01010" font-family="Liberation Serif, serif">G</text><text x="-1" y="9" font-size="14" font-weight="bold" fill="#e8e0e8" font-family="Liberation Serif, serif">P</text><path d="M2 -9l3 -3l2 4l4 -1l-3 4z" fill="#fff"/></g>
<!-- red zhong -->
<g transform="translate(535.500 1040)"><rect width="29" height="29" fill="#e01818"/><rect width="29" height="14" fill="#ff6a6a" opacity=".75"/><rect x="0.500" y="0.500" width="28" height="28" fill="none" stroke="#ff9a9a" stroke-width="1" opacity=".7"/><path d="M4 9.500h10M9 9.500v14M12 14h5.500M17.500 6v18M17.500 14.500h7v9.500h-7M17.500 19h7" fill="none" stroke="#fff" stroke-width="2.200"/></g>
<!-- red G dragon -->
<path d="M601 1059c0-8 7-15 15-16l6-3-2 5c3 0 5 1 6 2l-7 3c-5 0-9 3-9 7s3 5 7 4l-1-4 9 1-3 10c-10 3-21 0-21-9z" fill="#e81818"/>
<!-- green e -->
<g transform="translate(675 1055)"><circle r="13" fill="#4cc832"/><path d="M-11 12C-16 2 -6 -12 8 -14" fill="none" stroke="#b8f080" stroke-width="1.600"/><path d="M6.500 4A7.500 7.500 0 1 1 7.500 -0.500H-6" fill="none" stroke="#fff" stroke-width="3.400"/></g>
<!-- computer -->
<g transform="translate(722 1040)"><rect x="14" y="0" width="14" height="18" fill="#e8e8e8" stroke="#444" stroke-width="1"/><path d="M17 1v8M20 1v8M23 1v8M26 1v8" stroke="#222" stroke-width="1.500"/><rect x="16" y="10" width="11" height="8" fill="#fff" stroke="#333"/><path d="M18 16l6-4M24 12v3M24 12h-3" stroke="#000" fill="none"/><rect x="1" y="8" width="15" height="12" fill="#9ab" stroke="#556"/><rect x="3" y="10" width="11" height="8" fill="#2ec6e8"/><path d="M5 22h8l2 6h-12z" fill="#ccd"/><rect x="3" y="26" width="14" height="3" fill="#99a"/></g>
<!-- word -->
<g transform="translate(784 1041)"><rect x="9" y="1" width="19" height="25" fill="#fff" stroke="#2b579a" stroke-width="1.200"/><path d="M17 7h9M17 11h9M17 15h9M17 19h9" stroke="#2b579a" stroke-width="1.800"/><path d="M0 3l16-3v28l-16-3z" fill="#2b579a"/><text x="2.500" y="19" font-size="13" font-weight="bold" fill="#fff" font-family="Liberation Sans, sans-serif">W</text></g>
<!-- gx works active -->
<g transform="translate(846 1040)"><rect width="29" height="29" fill="#e01818"/><rect width="29" height="14" fill="#ff6a6a" opacity=".75"/><rect x="0.500" y="0.500" width="28" height="28" fill="none" stroke="#ff9a9a" stroke-width="1" opacity=".7"/><path d="M4 11.500h7.500M11.500 6v17.500M17 6v6.500M17 17v6.500M17 11.500h8.500M17 18h8.500M21.500 6v3M21.500 21v3" fill="none" stroke="#fff" stroke-width="2.400"/></g>
<!-- tray -->
<path d="M1176 1059.500l8-8 8 8" fill="none" stroke="#fff" stroke-width="1.600"/>
<circle cx="1214" cy="1055" r="10" fill="#f2d82c"/><path d="M1204.500 1058c5 5 14 5 19-2" stroke="#3aa63a" stroke-width="3" fill="none"/><path d="M1209.500 1054h8M1213.500 1050v8" stroke="#1e8c2e" stroke-width="2.400"/>
<g fill="none" stroke="#fff" stroke-width="1.400"><rect x="1238.500" y="1049.500" width="15" height="10" fill="#fff"/><path d="M1236.500 1052v5"/><path d="M1234 1047v4M1236.500 1047v4M1233 1051h4.500v2.500h-4.500z" stroke-width="1"/></g>
<g fill="none" stroke="#fff" stroke-width="1.500"><path d="M1267.500 1064a14.500 14.500 0 0 1 14.500 -14.500" opacity=".55"/><path d="M1271.500 1064a10.500 10.500 0 0 1 10.500 -10.500"/><path d="M1275.500 1064a6.500 6.500 0 0 1 6.500 -6.500"/><circle cx="1281" cy="1063" r="1.300" fill="#fff"/></g>
<g fill="none" stroke="#fff" stroke-width="1.400"><path d="M1294.500 1051.500h3.500l5-4.500v16l-5-4.500h-3.500z"/><path d="M1306 1051.500a5 5 0 0 1 0 7"/><path d="M1309 1048.500a9 9 0 0 1 0 13" opacity=".55"/><path d="M1312 1046a13 13 0 0 1 0 18" opacity=".35"/></g>
<text x="1325.500" y="1061" font-size="17" fill="#fff" font-family="Liberation Sans, Noto Sans CJK SC, sans-serif">中</text>
<g transform="translate(1369 1055) rotate(-14)"><rect x="-9.500" y="-9" width="19" height="18" rx="3" fill="#38b82e"/><text x="-6.500" y="6.500" font-size="18" font-weight="bold" fill="#fff" font-family="Liberation Sans, sans-serif">S</text></g>
<circle cx="1412.300" cy="1055" r="13.500" fill="#17c45a"/><path d="M1399.500 1051a13.500 13.500 0 0 1 25.600 0" fill="none" stroke="#0c7a36" stroke-width="2"/>
<text x="1412.300" y="1060.500" font-size="15" fill="#fff" text-anchor="middle" font-family="Liberation Sans, sans-serif">58</text>
<text x="1441" y="1050.500" font-size="15.500" fill="#fff" font-family="Liberation Sans, Noto Sans CJK SC, sans-serif">13:08 周二</text>
<text x="1441" y="1070" font-size="15.500" fill="#fff" font-family="Liberation Sans, Noto Sans CJK SC, sans-serif" textLength="74" lengthAdjust="spacingAndGlyphs">2021/3/30</text>
<g><path d="M1541 1046v14" stroke="#fff" stroke-width="1.400"/><rect x="1544" y="1044" width="15" height="19" fill="#fff"/><path d="M1546.500 1048.500h10M1546.500 1052h10M1546.500 1055.500h6" stroke="#1d1d1d" stroke-width="1.200"/><rect x="1553.500" y="1055.500" width="14.500" height="13.500" fill="#e81123"/><text x="1560.700" y="1066.500" font-size="11" fill="#fff" text-anchor="middle" font-family="Liberation Sans, sans-serif">3</text></g>
<g><path d="M1590 1044.500h20.500v15.500h-14.500l-6 5z" fill="#fff"/><path d="M1593.500 1049h13.500M1593.500 1052.500h13.500M1593.500 1056h9" stroke="#1d1d1d" stroke-width="1.200"/><circle cx="1609" cy="1063" r="8.500" fill="#1d1d1d" stroke="#fff" stroke-width="1.300"/><text x="1609" y="1068" font-size="13" font-weight="bold" fill="#fff" text-anchor="middle" font-family="Liberation Sans, sans-serif">1</text></g>
<rect x="1634.500" y="1030" width="1" height="46" fill="#6a6a6a"/>
</svg>
</div>
<!--MENUS--><div class="menu" style="left:365px;top:59px;width:334px;height:631px">
<div class="strip" style="width:34.300px"></div>
<div class="mi" style="left:44.900px;top:6.48px">IC存储卡(<u>I</u>)</div>
<div class="arr" style="left:317px;top:11.78px"></div>
<div class="mi" style="left:44.900px;top:35.23px">程序检查(<u>G</u>)...</div>
<div class="mi" style="left:44.900px;top:63.98px">参数检查(<u>C</u>)...</div>
<div class="mi" style="left:44.900px;top:92.73px">清除全部参数(<u>F</u>)...</div>
<div class="mi dis" style="left:44.900px;top:121.48px">自动分配软元件设置(<u>V</u>)...</div>
<div class="mi dis" style="left:44.900px;top:150.22px">块口令设置(<u>B</u>)...</div>
<div class="mi" style="left:44.900px;top:178.97px">存储器容量计算(<u>M</u>)...</div>
<div class="mi" style="left:44.900px;top:207.72px">删除未使用的软元件注释(<u>J</u>)</div>
<div class="msep" style="left:45.300px;right:0;top:232.90px"></div>
<div class="mi" style="left:44.900px;top:240.22px">数据合并(<u>A</u>)...</div>
<div class="msep" style="left:45.300px;right:0;top:265.40px"></div>
<div class="mi" style="left:44.900px;top:272.72px">TEL功能设置/通过调制解调器连接(<u>E</u>)</div>
<div class="arr" style="left:317px;top:278.02px"></div>
<div class="msep" style="left:45.300px;right:0;top:297.90px"></div>
<div class="mi" style="left:44.900px;top:305.22px">记录设置工具(<u>L</u>)...</div>
<div class="mi dis" style="left:44.900px;top:333.97px">实时监视功能(<u>Q</u>)...</div>
<div class="mi" style="left:44.900px;top:362.72px">以太网适配器模块设置工具(<u>H</u>)...</div>
<div class="mi" style="left:44.900px;top:391.47px">内置I/O模块用工具(<u>U</u>)</div>
<div class="arr" style="left:317px;top:396.77px"></div>
<div class="msep" style="left:45.300px;right:0;top:416.65px"></div>
<div class="mi" style="left:44.900px;top:423.97px">智能功能模块参数检查(<u>N</u>)</div>
<div class="arr" style="left:317px;top:429.27px"></div>
<div class="hl" style="left:2px;top:447.92px;width:328px;height:28px"></div>
<div class="mi" style="left:44.900px;top:452.72px">智能功能模块用工具(<u>T</u>)</div>
<div class="arr" style="left:317px;top:458.02px"></div>
<div class="msep" style="left:45.300px;right:0;top:477.90px"></div>
<div class="mi" style="left:44.900px;top:485.22px">通信协议支持功能(<u>R</u>)</div>
<div class="arr" style="left:317px;top:490.52px"></div>
<div class="msep" style="left:45.300px;right:0;top:510.40px"></div>
<div class="mi" style="left:44.900px;top:517.73px">选择语言(<u>S</u>)...</div>
<div class="mi" style="left:44.900px;top:546.48px">配置文件管理(<u>P</u>)</div>
<div class="arr" style="left:317px;top:551.77px"></div>
<div class="mi" style="left:44.900px;top:575.23px">自定义快捷键(<u>K</u>)...</div>
<div class="mi" style="left:44.900px;top:603.98px">选项(<u>O</u>)...</div>
</div>
<div class="abs" style="left:366px;top:59px;width:66.500px;height:1px;background:#fdfaff"></div>
<div class="menu" style="left:698px;top:509px;width:265px;height:177px">
<div class="strip" style="width:34px;top:28px"></div>
<div class="hl" style="left:1px;top:0.90px;width:260px;height:28px"></div>
<div class="mi" style="left:44.500px;top:5.30px">模拟模块(<u>A</u>)</div>
<div class="arr" style="left:248px;top:10.60px"></div>
<div class="mi" style="left:44.500px;top:34.05px">温度输入模块(<u>I</u>)</div>
<div class="arr" style="left:248px;top:39.35px"></div>
<div class="mi" style="left:44.500px;top:62.80px">温度调节模块(<u>T</u>)</div>
<div class="arr" style="left:248px;top:68.10px"></div>
<div class="mi" style="left:44.500px;top:91.55px">计数器模块(<u>C</u>)</div>
<div class="arr" style="left:248px;top:96.85px"></div>
<div class="mi" style="left:44.500px;top:120.30px">QD75/LD75型定位模块(<u>P</u>)</div>
<div class="arr" style="left:248px;top:125.60px"></div>
<div class="mi" style="left:44.500px;top:149.05px">串行通信模块(<u>S</u>)</div>
<div class="arr" style="left:248px;top:154.35px"></div>
</div>
<div class="menu" style="left:962.5px;top:510.4px;width:272.500px;height:119.500px">
<div class="strip" style="width:34px;top:29px"></div>
<div class="hl" style="left:1.500px;top:1.90px;width:267px;height:27.5px"></div>
<svg class="abs" style="left:6px;top:4.60px" width="22" height="22" viewBox="0 0 22 22"><rect x="3" y="1" width="18" height="17" fill="#fff"/><path d="M4.500 1v16h16" fill="none" stroke="#222" stroke-width="1.200"/><path d="M5 16l6-14" stroke="#444" stroke-width="1.200"/><path d="M10 16c3 0 3-12 5-12s2 12 5 12" fill="none" stroke="#3a8f8f" stroke-width="1.300"/><path d="M14.500 8v8" stroke="#333" stroke-width="1.600"/><path d="M0 12l7 3.500-7 3.500z" fill="#1fa01f"/></svg>
<div class="mi" style="left:45px;top:5.80px">偏置·增益设置(<u>O</u>)...</div>
<div class="mi" style="left:45px;top:34.70px">Q61LD的静载校准设置(<u>S</u>)...</div>
<div class="mi" style="left:45px;top:63.60px">Q61LD的默认设置(<u>D</u>)...</div>
<div class="mi" style="left:45px;top:92.50px">创建波形输出数据(<u>W</u>)...</div>
</div>
<div class="t" style="left:1314px;top:926px;font-size:25px;line-height:32px;height:32px;color:rgba(120,120,120,.62)">激活 <span style="letter-spacing:1.3px">Windows</span></div>
<div class="t" style="left:1314px;top:957px;font-size:18.500px;line-height:24px;height:24px;color:rgba(120,120,120,.62)">转到“设置”以激活 <span style="letter-spacing:0.5px">Windows</span>。</div><!--/MENUS-->
</body>
</html>
